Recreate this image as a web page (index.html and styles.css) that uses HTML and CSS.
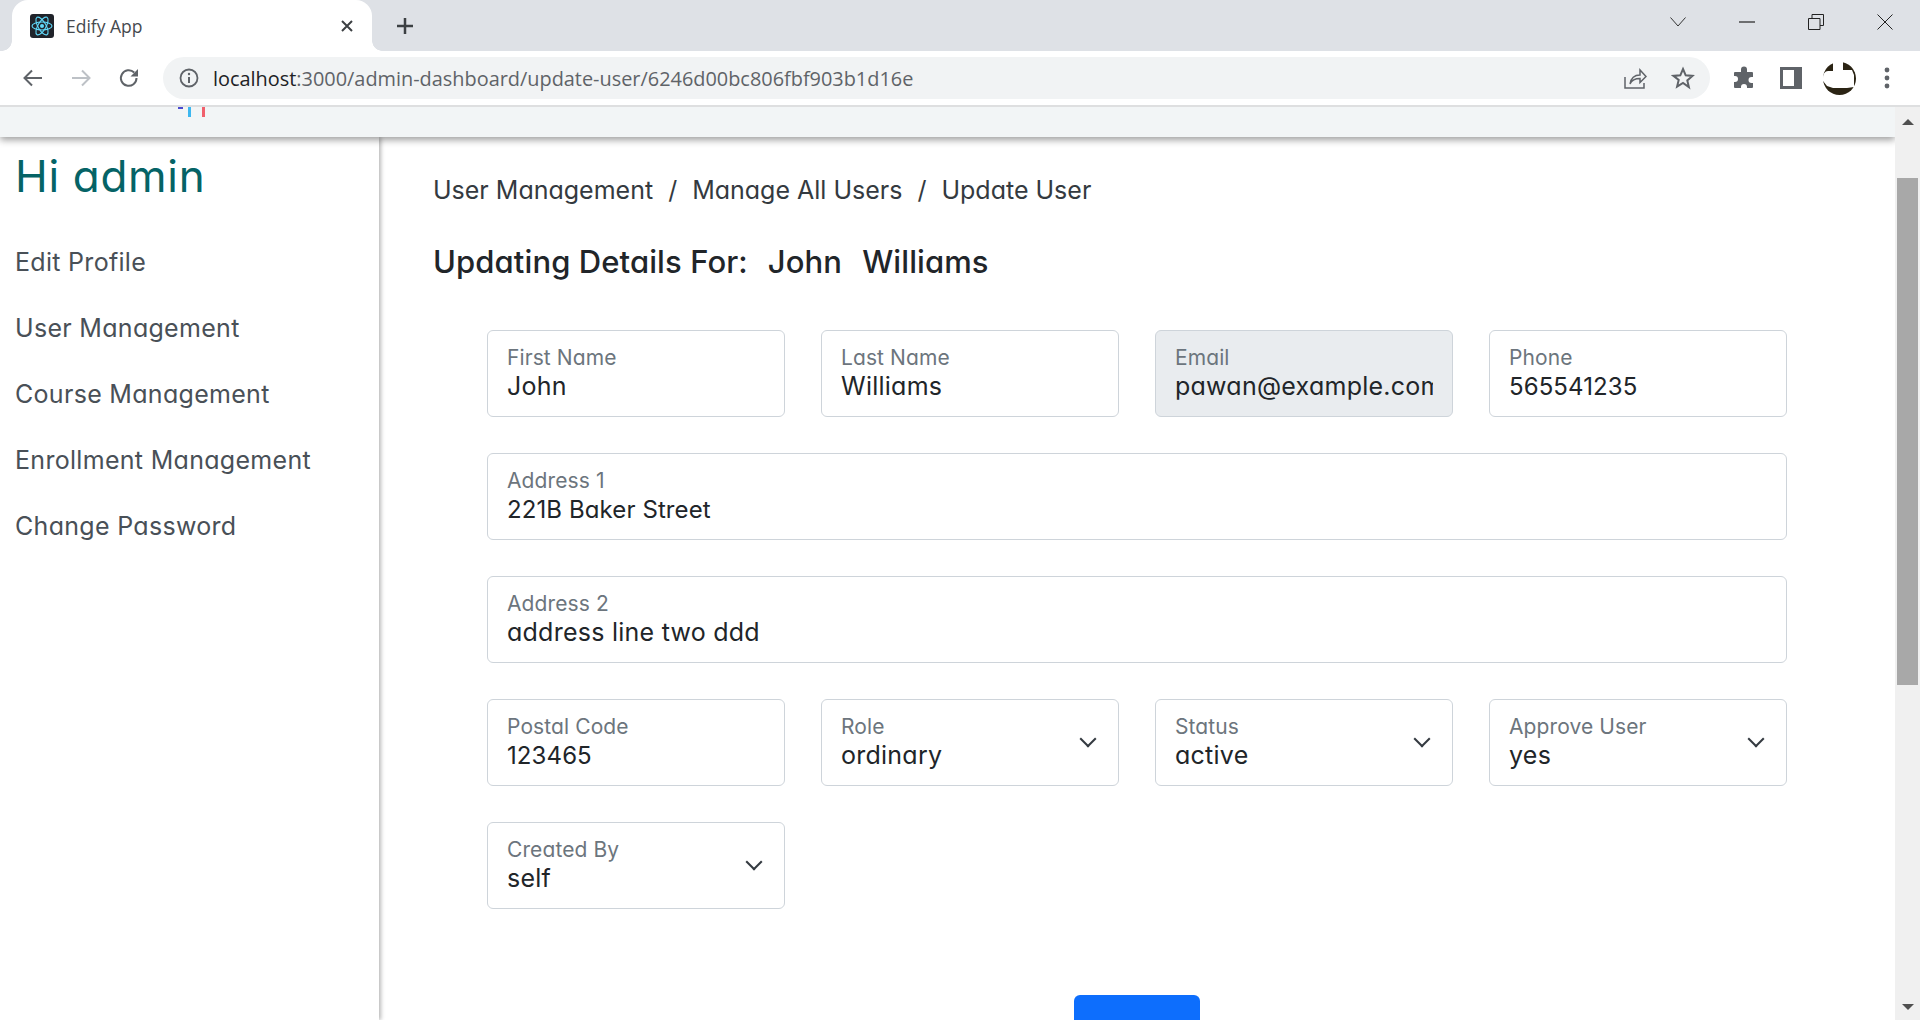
FILE: index.html
```html
<!DOCTYPE html>
<html lang="en">
<head>
  <meta charset="UTF-8">
  <title>Edify App</title>
  <link rel="stylesheet" href="styles.css">
</head>
<body>

  <div class="tabstrip">
    <div class="tab">
      <svg class="favicon" width="24" height="24" viewBox="0 0 24 24">
        <rect width="24" height="24" rx="3" fill="#20232a"/>
        <g fill="none" stroke="#61dafb" stroke-width="1.1">
          <ellipse cx="12" cy="12" rx="10" ry="4"/>
          <ellipse cx="12" cy="12" rx="10" ry="4" transform="rotate(60 12 12)"/>
          <ellipse cx="12" cy="12" rx="10" ry="4" transform="rotate(120 12 12)"/>
        </g>
        <circle cx="12" cy="12" r="2" fill="#61dafb"/>
      </svg>
      <span class="tab-title">Edify App</span>
      <svg class="tab-close" width="14" height="14" viewBox="0 0 14 14">
        <path d="M2 2l10 10M12 2L2 12" stroke="#3c4043" stroke-width="2" fill="none"/>
      </svg>
    </div>
    <svg class="new-tab" width="20" height="20" viewBox="0 0 20 20">
      <path d="M10 2v16M2 10h16" stroke="#3c4043" stroke-width="2.500" fill="none"/>
    </svg>
    <div class="win-controls">
      <svg width="16" height="10" viewBox="0 0 16 10"><path d="M.5.500l7.500 8.500 7.500-8.500" stroke="#333" stroke-width="1" fill="none"/></svg>
      <svg width="16" height="4" viewBox="0 0 16 4"><path d="M0 2h16" stroke="#222" stroke-width="1.2" fill="none"/></svg>
      <svg width="16" height="16" viewBox="0 0 16 16"><path d="M.5 4.500h11.500v11H.5zM4 4.500V.5h11.500v11H12" stroke="#222" stroke-width="1" fill="none"/></svg>
      <svg width="16" height="16" viewBox="0 0 16 16"><path d="M.5.500l15 15M15.500.500l-15 15" stroke="#222" stroke-width="1" fill="none"/></svg>
    </div>
  </div>

  <div class="toolbar">
    <div class="nav-buttons">
      <svg width="22" height="22" viewBox="0 0 22 22"><path d="M20 11H3M10 3.500L2.500 11l7.500 7.500" stroke="#5f6368" stroke-width="2" fill="none"/></svg>
      <svg width="22" height="22" viewBox="0 0 22 22"><path d="M2 11h17M12 3.500l7.500 7.500-7.500 7.500" stroke="#bdc1c6" stroke-width="2" fill="none"/></svg>
      <svg width="22" height="22" viewBox="0 0 22 22"><path d="M18.500 11a7.800 7.800 0 1 1-2.300-5.500" stroke="#5f6368" stroke-width="2" fill="none"/><path d="M20 2v7.500h-7.500z" fill="#5f6368"/></svg>
    </div>
    <div class="omnibox">
      <svg width="20" height="20" viewBox="0 0 20 20">
        <circle cx="10" cy="10" r="8.500" fill="none" stroke="#5f6368" stroke-width="1.800"/>
        <path d="M10 9v6" stroke="#5f6368" stroke-width="2"/>
        <circle cx="10" cy="6" r="1.200" fill="#5f6368"/>
      </svg>
      <span class="url"><span class="url-host">localhost</span>:3000/admin-dashboard/update-user/6246d00bc806fbf903b1d16e</span>
      <svg class="share-icon" width="24" height="24" viewBox="0 0 24 24">
        <path d="M2 11v11h19v-5M7 18c1-6 5-9 10-9V4l6 6.500-6 6v-4c-4 0-8 1-10 5.500z" stroke="#5f6368" stroke-width="1.500" fill="none"/>
      </svg>
      <svg width="24" height="24" viewBox="0 0 24 24">
        <path d="M12 3l2.700 6.300 6.800.6-5.200 4.500 1.600 6.700L12 17l-5.900 3.600 1.600-6.700L2.500 9.900l6.800-.6z" stroke="#5f6368" stroke-width="2" fill="none"/>
      </svg>
    </div>
    <div class="toolbar-actions">
      <svg width="24" height="24" viewBox="0 0 24 24">
        <path d="M9 3.500a3 3 0 0 1 6 0V6h5a1 1 0 0 1 1 1v4h-1.500a3 3 0 0 0 0 6H21v4a1 1 0 0 1-1 1h-5v-1a3 3 0 0 0-6 0v1H3a1 1 0 0 1-1-1v-5h1a3 3 0 0 0 0-6H2V7a1 1 0 0 1 1-1h6z" fill="#5f6368"/>
      </svg>
      <svg width="22" height="22" viewBox="0 0 22 22">
        <path d="M0 0h22v22H0z" fill="#5f6368"/><path d="M3 3h11v16H3z" fill="#fff"/>
      </svg>
      <svg class="avatar" width="33" height="33" viewBox="0 0 33 33">
        <circle cx="16.500" cy="16.500" r="16.500" fill="#2b2414"/>
        <path d="M0 16C0 12 2 9 5 9h5V0h10v8h9l2 5v12l-7 1H10l-6-2-4-5z" fill="#fff"/>
      </svg>
      <svg width="6" height="22" viewBox="0 0 6 22">
        <circle cx="3" cy="3" r="2.400" fill="#5f6368"/><circle cx="3" cy="11" r="2.400" fill="#5f6368"/><circle cx="3" cy="19" r="2.400" fill="#5f6368"/>
      </svg>
    </div>
  </div>

  <div class="viewport">
    <div class="page">
      <div class="navbar">
        <svg class="logo-scrap" width="27" height="10" viewBox="0 0 27 10">
          <path d="M0 0h5v2H0z" fill="#4a4ad0"/>
          <path d="M10 0h3v10h-3z" fill="#3db7f0"/>
          <path d="M24 0h3v10h-3z" fill="#f0606c"/>
        </svg>
      </div>
      <div class="content">
        <aside class="sidebar">
          <h2 class="greeting">Hi admin</h2>
          <a class="side-link">Edit Profile</a>
          <a class="side-link">User Management</a>
          <a class="side-link">Course Management</a>
          <a class="side-link">Enrollment Management</a>
          <a class="side-link">Change Password</a>
        </aside>
        <main class="main">
          <div class="breadcrumb">
            <span>User Management</span><span class="sep">/</span>
            <span>Manage All Users</span><span class="sep">/</span>
            <span>Update User</span>
          </div>
          <h3 class="title">
            <span>Updating Details For:</span><span>John</span><span>Williams</span>
          </h3>
          <form class="form-grid">
            <div class="field"><label>First Name</label><div class="value">John</div></div>
            <div class="field"><label>Last Name</label><div class="value">Williams</div></div>
            <div class="field disabled"><label>Email</label><div class="value">pawan@example.com</div></div>
            <div class="field"><label>Phone</label><div class="value tight">565541235</div></div>

            <div class="field wide"><label>Address 1</label><div class="value tight">221B Baker Street</div></div>
            <div class="field wide"><label>Address 2</label><div class="value">address line two ddd</div></div>

            <div class="field"><label>Postal Code</label><div class="value tight">123465</div></div>
            <div class="field select"><label>Role</label><div class="value">ordinary</div></div>
            <div class="field select"><label>Status</label><div class="value">active</div></div>
            <div class="field select"><label>Approve User</label><div class="value">yes</div></div>

            <div class="field select"><label>Created By</label><div class="value">self</div></div>
          </form>
          <div class="submit-row">
            <button class="submit" type="button">Update</button>
          </div>
        </main>
      </div>
    </div>
    <div class="scrollbar">
      <div class="arrow-up"></div>
      <div class="thumb"></div>
      <div class="arrow-down"></div>
    </div>
  </div>

</body>
</html>
```

FILE: styles.css
```css
html, body {
  margin: 0;
  padding: 0;
  height: 100%;
  overflow: hidden;
  background: #fff;
  font-family: 'Inter', 'Open Sans', sans-serif;
  font-feature-settings: 'cv11';
}

/* browser chrome */
.tabstrip {
  height: 51px;
  background: #dee1e6;
  display: flex;
  align-items: center;
  box-sizing: border-box;
}

.tab {
  width: 360px;
  height: 51px;
  margin-left: 12px;
  background: #fff;
  border-radius: 16px 16px 0 0;
  display: flex;
  align-items: center;
  padding: 0 18px;
  box-sizing: border-box;
  position: relative;
}

.tab::before, .tab::after {
  content: '';
  position: absolute;
  bottom: 0;
  width: 10px;
  height: 10px;
}

.tab::before {
  left: -10px;
  background: radial-gradient(circle at 0 0, #dee1e6 9.5px, #fff 10px);
}

.tab::after {
  right: -10px;
  background: radial-gradient(circle at 100% 0, #dee1e6 9.5px, #fff 10px);
}

.favicon {
  margin-right: 12px;
}

.tab-title {
  flex: 1;
  font-family: 'Open Sans', sans-serif;
  font-size: 17.500px;
  color: #45494e;
  font-feature-settings: normal;
}

.new-tab {
  margin-left: 23px;
}

.win-controls {
  margin-left: auto;
  align-self: flex-start;
  display: flex;
  align-items: center;
  gap: 53px;
  padding-right: 27px;
  height: 43px;
}

.toolbar {
  height: 54px;
  background: #fff;
  display: flex;
  align-items: center;
  border-bottom: 2px solid #dedfe0;
}

.nav-buttons {
  display: flex;
  align-items: center;
  gap: 26px;
  padding-left: 22px;
  width: 163px;
  box-sizing: border-box;
}

.omnibox {
  width: 1547px;
  height: 42px;
  background: #f1f3f4;
  border-radius: 21px;
  display: flex;
  align-items: center;
  padding: 0 15px 0 16px;
  box-sizing: border-box;
  gap: 24px;
}

.url {
  flex: 1;
  margin-left: -10px;
  font-family: 'Open Sans', sans-serif;
  font-size: 19.900px;
  color: #5f6368;
  font-feature-settings: normal;
  white-space: nowrap;
}

.url-host {
  color: #202124;
}

.toolbar-actions {
  display: flex;
  align-items: center;
  margin-left: 22px;
  gap: 24px;
}

.avatar {
  margin: 0 4px 0 -3px;
}

/* page */
.viewport {
  height: 913px;
  display: flex;
}

.page {
  flex: 1;
  min-width: 0;
  display: flex;
  flex-direction: column;
  overflow: hidden;
}

.navbar {
  height: 30px;
  flex: none;
  background: #f2f5f6;
  box-shadow: 0 3px 7px rgba(0, 0, 0, 0.38);
  position: relative;
  z-index: 2;
}

.logo-scrap {
  display: block;
  margin-left: 178px;
}

.content {
  flex: 1;
  display: flex;
  min-height: 0;
}

.sidebar {
  width: 379px;
  flex: none;
  box-sizing: border-box;
  padding: 0 15px;
  box-shadow: 2px 0 4px rgba(0, 0, 0, 0.28);
  display: flex;
  flex-direction: column;
}

.greeting {
  margin: 12px 0 26px;
  font-size: 44px;
  line-height: 54px;
  font-weight: 400;
  letter-spacing: 0.700px;
  color: #056366;
}

.side-link {
  font-size: 25px;
  line-height: 66px;
  letter-spacing: 0.300px;
  color: #495057;
}

.main {
  flex: 1;
  min-width: 0;
  padding: 0 0 0 54px;
}

.breadcrumb {
  margin-top: 35px;
  display: flex;
  align-items: center;
  font-size: 25px;
  line-height: 36px;
  color: #343a40;
}

.sep {
  margin: 0 15px;
}

.title {
  margin: 32px 0 0;
  display: flex;
  gap: 20px;
  font-size: 31px;
  line-height: 44px;
  font-weight: 500;
  letter-spacing: 0.100px;
  color: #212529;
}

.form-grid {
  margin: 46px 0 0 54px;
  width: 1300px;
  display: grid;
  grid-template-columns: repeat(4, 298px);
  column-gap: 36px;
  row-gap: 36px;
}

.field {
  height: 87px;
  box-sizing: border-box;
  border: 1px solid #ced4da;
  border-radius: 6px;
  padding: 13px 19px 0;
  overflow: hidden;
  position: relative;
}

.field label {
  display: block;
  font-size: 21px;
  line-height: 27px;
  letter-spacing: 0.100px;
  color: #6c757d;
}

.value {
  font-size: 25px;
  line-height: 31px;
  letter-spacing: 0.250px;
  color: #212529;
  white-space: nowrap;
  overflow: hidden;
}

.value.tight {
  font-size: 24px;
  letter-spacing: 0.100px;
}

.wide {
  grid-column: span 4;
}

.disabled {
  background: #e9ecef;
}

.select::after {
  content: '';
  position: absolute;
  right: 24px;
  top: 33px;
  width: 10px;
  height: 10px;
  border-right: 2px solid #343a40;
  border-bottom: 2px solid #343a40;
  transform: rotate(45deg);
}

.submit-row {
  margin: 86px 0 0 54px;
  width: 1300px;
  display: flex;
  justify-content: center;
}

.submit {
  width: 126px;
  padding: 22px 0 8px;
  border: none;
  border-radius: 6px;
  background: #0d6efd;
  color: #fff;
  font-family: inherit;
  font-size: 24px;
  line-height: 30px;
}

/* scrollbar */
.scrollbar {
  width: 25px;
  flex: none;
  background: #f0f0f0;
  position: relative;
}

.thumb {
  position: absolute;
  top: 71px;
  left: 2px;
  width: 21px;
  height: 507px;
  background: #a8a8a8;
}

.arrow-up, .arrow-down {
  position: absolute;
  left: 7px;
  width: 0;
  height: 0;
  border-left: 6px solid transparent;
  border-right: 6px solid transparent;
}

.arrow-up {
  top: 12px;
  border-bottom: 6px solid #505050;
}

.arrow-down {
  bottom: 10px;
  border-top: 6px solid #505050;
}
```
